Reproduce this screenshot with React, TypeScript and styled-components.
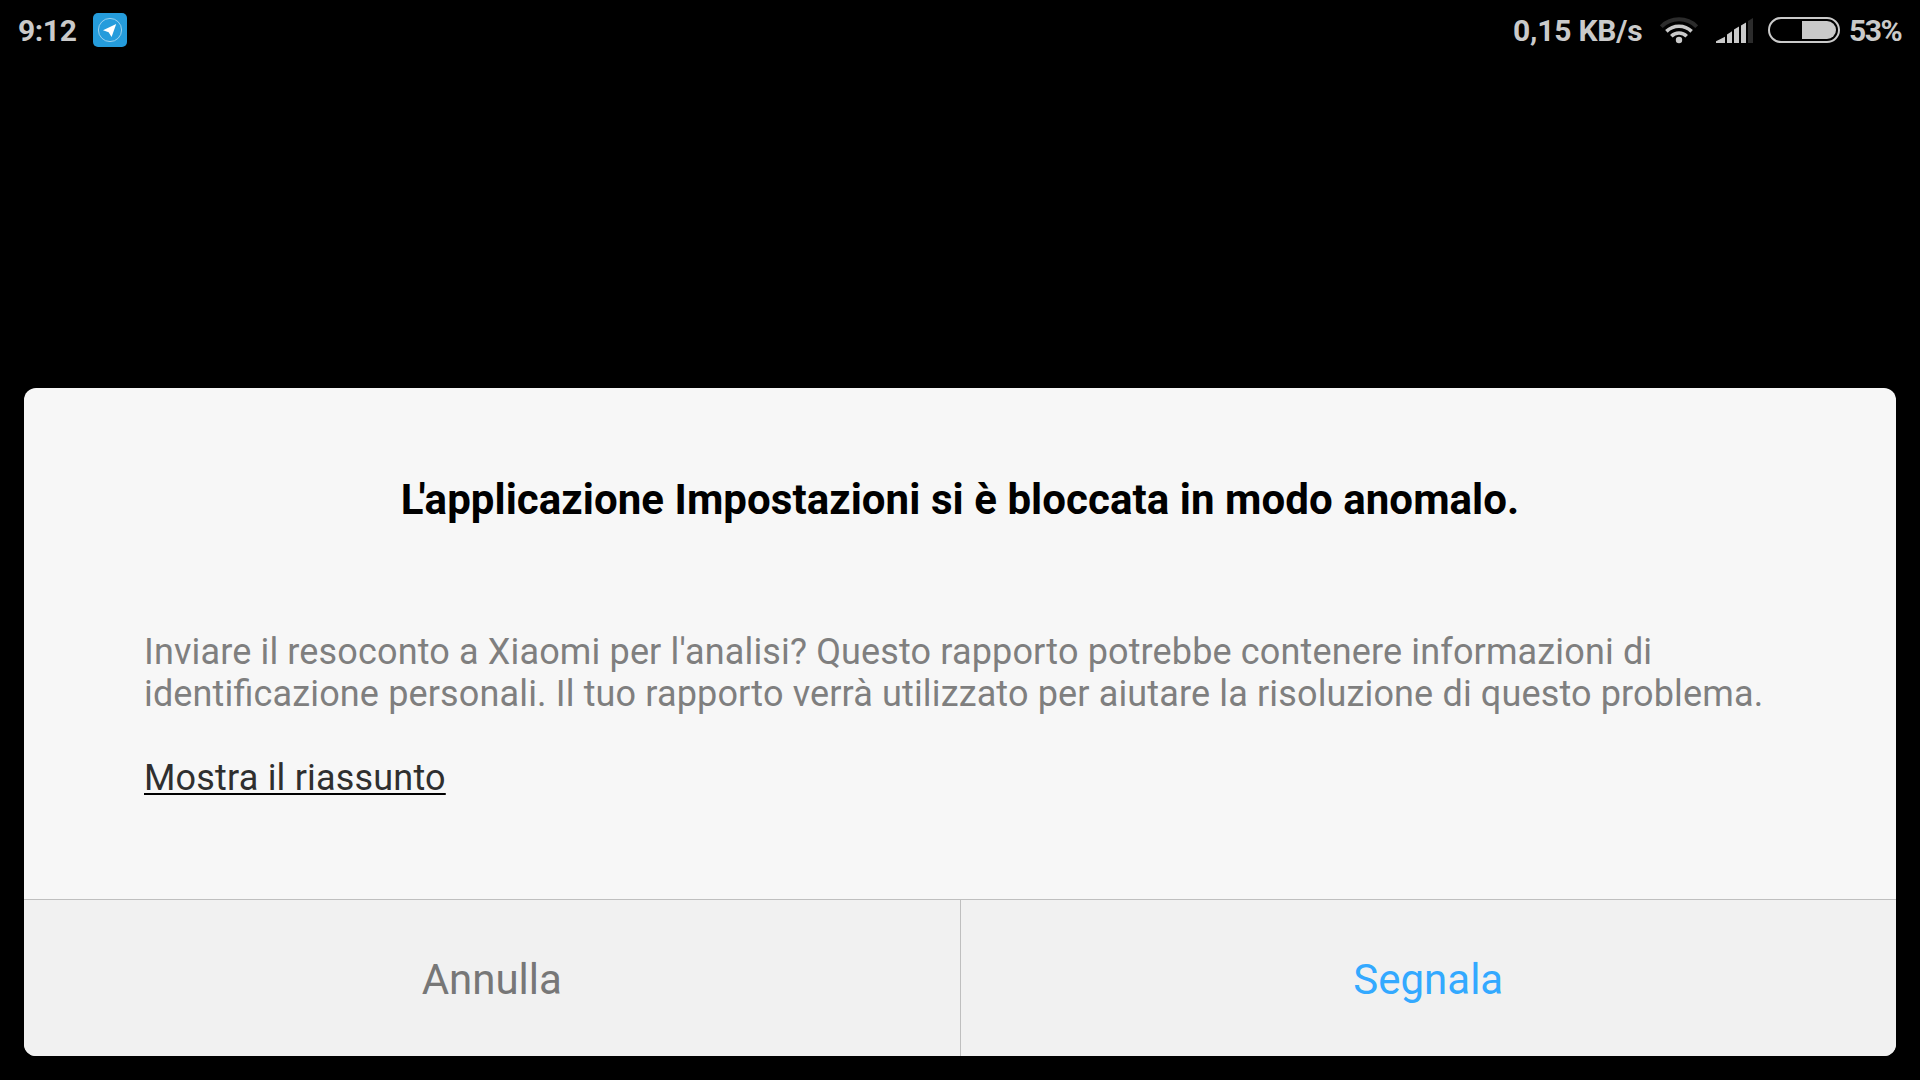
import React from 'react';
import styled, { createGlobalStyle } from 'styled-components';

const GlobalStyle = createGlobalStyle`
    * {
        box-sizing: border-box;
    }
    body {
        margin: 0;
        background-color: #000;
        font-family: Roboto, sans-serif;
    }
`;

const Screen = styled.div`
    display: flex;
    flex-direction: column;
    justify-content: space-between;
    width: 1920px;
    height: 1080px;
    padding-bottom: 24px;
    overflow: hidden;
`;

const StatusBar = styled.div`
    display: flex;
    align-items: center;
    height: 60px;
    padding: 0 21px 0 18px;
    color: #cacaca;
    font-size: 30px;
    font-weight: 700;
    svg {
        display: block;
        flex: none;
    }
`;

const StatusText = styled.div<{ $width: number; $spacing?: number }>`
    width: ${({ $width }) => $width}px;
    letter-spacing: ${({ $spacing = 0 }) => $spacing}px;
    white-space: nowrap;
`;

const StatusIcons = styled.div`
    display: flex;
    align-items: center;
    margin-left: auto;
`;

const Dialog = styled.div`
    display: flex;
    flex-direction: column;
    height: 668px;
    margin: 0 24px;
    overflow: hidden;
    border-radius: 12px;
    background-color: #f7f7f7;
`;

const DialogTitle = styled.h1`
    margin: 85px 0 0;
    color: #000;
    font-size: 42px;
    font-weight: 700;
    letter-spacing: 0.06px;
    line-height: 54px;
    text-align: center;
`;

const TightLetter = styled.span`
    letter-spacing: -4.6px;
`;

const DialogBody = styled.div`
    flex: 1;
    padding: 104px 120px 0;
    color: #7f7f7f;
    font-size: 36px;
    font-feature-settings: 'liga' 1;
    letter-spacing: 0.145px;
    line-height: 42px;
    white-space: nowrap;
`;

const SummaryLink = styled.div`
    margin-top: 42px;
    color: #2f2f2f;
    letter-spacing: 0.19px;
    text-decoration: underline #000 2px;
    text-decoration-skip-ink: none;
    text-underline-offset: 3px;
`;

const ButtonRow = styled.div`
    display: flex;
    height: 157px;
    border-top: 1px solid #bfbfbf;
    background-color: #f1f1f1;
`;

const DialogButton = styled.button<{ $primary?: boolean }>`
    flex: 1;
    padding: 3px 0 0;
    border: none;
    background: none;
    color: ${({ $primary }) => ($primary ? '#33a9ff' : '#777')};
    font-family: inherit;
    font-size: 42px;
    & + & {
        border-left: 1px solid #bfbfbf;
    }
`;

const TelegramIcon = () => (
    <svg width="34" height="34" viewBox="0 0 34 34">
        <rect width="34" height="34" rx="5" fill="#259cdc" />
        <circle
            cx="17"
            cy="17"
            r="11.6"
            fill="none"
            stroke="#a9d8f2"
            strokeWidth="0.9"
        />
        <path d="M10 17.2 23.2 11 18.6 24 15.6 19.3Z" fill="#fff" />
    </svg>
);

const WifiIcon = () => (
    <svg width="38" height="28" viewBox="0 0 38 28" fill="none">
        <path d="M1.3 10.7a25 25 0 0 1 35.4 0" stroke="#2b2b2b" strokeWidth="4" />
        <g stroke="#cacaca" strokeWidth="3.6">
            <path d="M6.4 15.4a18 18 0 0 1 25.2 0" />
            <path d="M11.3 20.2a11 11 0 0 1 15.4 0" />
        </g>
        <circle cx="19" cy="24" r="3.2" fill="#cacaca" />
    </svg>
);

const SignalIcon = () => (
    <svg width="37" height="25" viewBox="0 0 37 25" fill="#cacaca">
        <path d="M0 25v-1.8L9 18.8V25Z" />
        <path d="M11 25V16.5L16 13.3V25Z" />
        <path d="M18 25V11.6L23 8.6V25Z" />
        <path d="M25 25V7.4L30 4.4V25Z" />
        <path d="M32 25V3L37 0V25Z" fill="#2b2b2b" />
    </svg>
);

const BatteryIcon = () => (
    <svg width="72" height="26" viewBox="0 0 72 26">
        <rect
            x="1"
            y="1"
            width="70"
            height="24"
            rx="12"
            fill="none"
            stroke="#cacaca"
            strokeWidth="2"
        />
        <path d="M34 4H59a9 9 0 0 1 0 18H34Z" fill="#cacaca" />
    </svg>
);

// gaps between the indicators are uneven, so each one carries its own
const Indicator = styled.div<{ $left: number; $top?: number }>`
    margin-left: ${({ $left }) => $left}px;
    padding-top: ${({ $top = 0 }) => $top}px;
`;

const App = () => (
    <>
        <GlobalStyle />
        <Screen>
            <StatusBar>
                <StatusText $width={75} $spacing={-0.4}>
                    9:12
                </StatusText>
                <TelegramIcon />
                <StatusIcons>
                    <StatusText $width={130} $spacing={-0.2}>
                        0,15 KB/s
                    </StatusText>
                    <Indicator $left={17}>
                        <WifiIcon />
                    </Indicator>
                    <Indicator $left={18} $top={1}>
                        <SignalIcon />
                    </Indicator>
                    <Indicator $left={15}>
                        <BatteryIcon />
                    </Indicator>
                    <Indicator $left={9}>
                        <StatusText $width={50} $spacing={-1.4}>
                            53%
                        </StatusText>
                    </Indicator>
                </StatusIcons>
            </StatusBar>
            <Dialog>
                <DialogTitle>
                    <TightLetter>L</TightLetter>
                    'applicazione Impostazioni si è bloccata in modo anomalo.
                </DialogTitle>
                <DialogBody>
                    Inviare il resoconto a Xiaomi per l'analisi? Questo rapporto
                    potrebbe contenere informazioni di
                    <br />
                    identificazione personali. Il tuo rapporto verrà utilizzato
                    per aiutare la risoluzione di questo problema.
                    <SummaryLink>Mostra il riassunto</SummaryLink>
                </DialogBody>
                <ButtonRow>
                    <DialogButton>Annulla</DialogButton>
                    <DialogButton $primary>Segnala</DialogButton>
                </ButtonRow>
            </Dialog>
        </Screen>
    </>
);

export default App;
